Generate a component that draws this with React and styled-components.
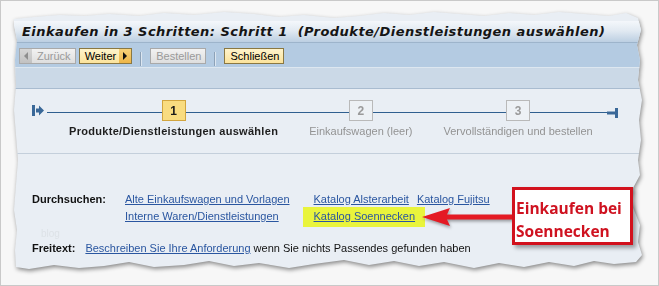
import React from 'react';
import styled, { createGlobalStyle } from 'styled-components';

const Global = createGlobalStyle`
  html, body { margin: 0; padding: 0; background: #f7f7f7; }
  body { font-family: "Liberation Sans", Arial, sans-serif; }
  * { box-sizing: border-box; }
`;

const Frame = styled.div`
  position: relative;
  width: 659px;
  height: 286px;
  border: 1px solid #c9c9c9;
  background: #f7f7f7;
  padding: 9px 0 0 13px;
  overflow: hidden;
`;

const Shadow = styled.div`
  width: 630px;
  filter: drop-shadow(1px 2px 2px rgba(0, 0, 0, 0.45));
`;

const torn = `polygon(
  0px 9px, 20px 7px, 45px 5px, 70px 6px, 95px 4px, 125px 6px, 150px 3px, 180px 5px, 210px 2px,
  240px 4px, 265px 7px, 290px 5px, 320px 8px, 345px 6px, 370px 3px, 395px 5px, 420px 2px,
  445px 4px, 470px 6px, 495px 3px, 520px 5px, 545px 2px, 570px 4px, 595px 6px, 612px 3px, 624px 8px,
  627px 20px, 623px 35px, 626px 50px, 624px 70px, 628px 90px, 625px 110px, 627px 130px, 624px 150px,
  626px 165px, 619px 178px, 615px 188px, 620px 200px, 626px 215px, 624px 232px, 628px 245px, 622px 252px,
  600px 254px, 580px 251px, 560px 256px, 535px 252px, 510px 257px, 485px 253px, 460px 258px,
  430px 252px, 405px 256px, 380px 251px, 355px 255px, 330px 250px, 300px 254px, 275px 258px,
  245px 253px, 220px 256px, 195px 251px, 170px 255px, 140px 257px, 115px 252px, 90px 256px,
  65px 258px, 40px 255px, 15px 259px, 2px 257px,
  1px 240px, 3px 220px, 0px 200px, 2px 175px, 4px 150px, 2px 125px, 0px 100px, 2px 75px,
  1px 50px, 3px 30px, 0px 15px
)`;

const Paper = styled.div`
  width: 630px;
  height: 262px;
  padding-top: 11px;
  background: #e9eef4;
  clip-path: ${torn};
`;

const TitleBar = styled.div`
  height: 22px;
  padding-left: 8px;
  display: flex;
  align-items: center;
  background: linear-gradient(#f4f7fb, #e2eaf2 45%, #bccfe2);
  border-bottom: 1px solid #9db4cb;
  font-family: "DejaVu Sans", Verdana, sans-serif;
  font-weight: bold;
  font-style: italic;
  font-size: 13px;
  letter-spacing: 0.45px;
  color: #151515;
  white-space: pre;
`;

const Toolbar = styled.div`
  height: 24px;
  padding: 5px 0 0 5px;
  display: flex;
  align-items: flex-start;
  background: #b4cbe2;
`;

const Button = styled.div`
  height: 16px;
  display: flex;
  align-items: stretch;
  border: 1px solid ${(p) => (p.$disabled ? '#a9a9a9' : '#8a7843')};
  background: ${(p) =>
    p.$disabled ? 'linear-gradient(#f2f2f2, #dedede)' : 'linear-gradient(#fff4cc, #fbe39c)'};
  color: ${(p) => (p.$disabled ? '#9a9a9a' : '#000')};
  font-size: 11px;
  line-height: 14px;
  margin-right: ${(p) => p.$gap || 0}px;
`;

const BtnText = styled.span`
  padding: 0 ${(p) => p.$pr ?? 4}px 0 5px;
`;

const Cap = styled.span`
  width: 12px;
  display: flex;
  align-items: center;
  justify-content: center;
  background: ${(p) => (p.$disabled ? 'linear-gradient(#d6d6d6, #c2c2c2)' : 'linear-gradient(#f8d27a, #eeb648)')};
`;

const Tri = styled.span`
  width: 0;
  height: 0;
  border-top: 4px solid transparent;
  border-bottom: 4px solid transparent;
  ${(p) =>
    p.$dir === 'left'
      ? `border-right: 4px solid ${p.$color};`
      : `border-left: 4px solid ${p.$color};`}
`;

const Sep = styled.span`
  width: 2px;
  height: 14px;
  margin: 4px 8px 0 8px;
  border-left: 1px solid #8da2b8;
  border-right: 1px solid #dce6f0;
`;

const SubBand = styled.div`
  height: 22px;
  background: #cbd9e7;
  border-top: 1px solid #dde7f0;
  border-bottom: 1px solid #a9bcd0;
`;

const StepBar = styled.div`
  display: flex;
  align-items: flex-start;
  padding: 11px 26px 0 18px;
`;

const Track = styled.div`
  position: relative;
  flex: 1;
  margin-left: 3px;
  display: flex;
  gap: 31px;
  padding-left: 22px;
  &::before {
    content: '';
    position: absolute;
    left: 0;
    right: 0;
    top: 12px;
    height: 1px;
    background: #2f5f8f;
  }
`;

const Step = styled.div`
  position: relative;
  display: flex;
  flex-direction: column;
  align-items: center;
  gap: 3px;
`;

const StepBox = styled.div`
  width: 24px;
  height: 21px;
  display: flex;
  align-items: center;
  justify-content: center;
  font-weight: bold;
  font-size: 12px;
  border: 1px solid ${(p) => (p.$active ? '#d2a53f' : '#b9b9b9')};
  background: ${(p) => (p.$active ? '#f9dc80' : '#edf1f5')};
  color: ${(p) => (p.$active ? '#1a1a1a' : '#9a9a9a')};
`;

const StepLabel = styled.div`
  font-size: 11px;
  line-height: 14px;
  white-space: nowrap;
  font-weight: ${(p) => (p.$active ? 'bold' : 'normal')};
  letter-spacing: ${(p) => (p.$active ? '0.3px' : '0')};
  color: ${(p) => (p.$active ? '#1e1e1e' : '#939393')};
`;

const Marker = styled.svg`
  display: block;
  margin-top: ${(p) => p.$top}px;
  flex: none;
`;

const Divider = styled.div`
  height: 1px;
  margin-top: 15px;
  background: #c4cfdb;
`;

const Browse = styled.div`
  padding: 37px 0 0 18px;
  font-size: 11px;
  line-height: 17px;
  color: #111;
`;

const Row = styled.div`
  display: flex;
  align-items: flex-start;
`;

const Label = styled.span`
  font-weight: bold;
  width: ${(p) => (p.$w ? `${p.$w}px` : 'auto')};
  margin-right: ${(p) => p.$mr || 0}px;
  flex: none;
`;

const Col = styled.div`
  display: flex;
  flex-direction: column;
  margin-left: ${(p) => p.$ml || 0}px;
  white-space: nowrap;
`;

const Link = styled.a`
  color: #2a56a0;
  text-decoration: underline;
  margin-right: ${(p) => p.$mr || 0}px;
`;

const Highlight = styled.span`
  background: #e9f43c;
  padding: 3px 10px 5px 11px;
  margin-left: -11px;
`;

const FreeRow = styled.div`
  margin-top: 15px;
  display: flex;
  white-space: pre;
`;

const Watermark = styled.span`
  position: absolute;
  left: 40px;
  top: 227px;
  font-size: 10px;
  line-height: 11px;
  color: #dde2e7;
`;

const Arrow = styled.svg`
  position: absolute;
  left: 418px;
  top: 203px;
  filter: drop-shadow(1px 2px 1.5px rgba(0, 0, 0, 0.35));
`;

const Callout = styled.div`
  position: absolute;
  left: 511px;
  top: 186px;
  width: 121px;
  height: 58px;
  border: 3px solid #d2111d;
  background: #ffffff;
  box-shadow: 3px 3px 4px rgba(0, 0, 0, 0.35);
  padding: 7px 0 0 1px;
  font-family: "Open Sans", "Noto Sans", sans-serif;
  font-weight: 700;
  font-size: 15.5px;
  line-height: 23px;
  color: #cf1220;
  white-space: nowrap;
`;

const steps = [
  { n: 1, label: 'Produkte/Dienstleistungen auswählen', active: true },
  { n: 2, label: 'Einkaufswagen (leer)' },
  { n: 3, label: 'Vervollständigen und bestellen' },
];

export default function App() {
  return (
    <>
      <Global />
      <Frame>
        <Shadow>
          <Paper>
            <TitleBar>Einkaufen in 3 Schritten: Schritt 1  (Produkte/Dienstleistungen auswählen)</TitleBar>
            <Toolbar>
              <Button $disabled $gap={3}>
                <Cap $disabled>
                  <Tri $dir="left" $color="#8e8e8e" />
                </Cap>
                <BtnText>Zurück</BtnText>
              </Button>
              <Button>
                <BtnText $pr={3}>Weiter</BtnText>
                <Cap>
                  <Tri $dir="right" $color="#111" />
                </Cap>
              </Button>
              <Sep />
              <Button $disabled>
                <BtnText>Bestellen</BtnText>
              </Button>
              <Sep />
              <Button>
                <BtnText>Schließen</BtnText>
              </Button>
            </Toolbar>
            <SubBand />
            <StepBar>
              <Marker $top={5} width="12" height="11" viewBox="0 0 12 11">
                <rect x="0" y="0" width="3" height="11" fill="#3a6898" />
                <path d="M4 3.5 H7 V0.5 L12 5.5 L7 10.5 V7.5 H4 Z" fill="#3a6898" />
              </Marker>
              <Track>
                {steps.map((s) => (
                  <Step key={s.n}>
                    <StepBox $active={s.active}>{s.n}</StepBox>
                    <StepLabel $active={s.active}>{s.label}</StepLabel>
                  </Step>
                ))}
              </Track>
              <Marker $top={8} width="11" height="10" viewBox="0 0 11 10">
                <rect x="0" y="3.5" width="8" height="3" fill="#3a6898" />
                <rect x="8" y="0" width="3" height="10" fill="#3a6898" />
              </Marker>
            </StepBar>
            <Divider />
            <Browse>
              <Row>
                <Label $w={93}>Durchsuchen:</Label>
                <Col>
                  <Link href="#">Alte Einkaufswagen und Vorlagen</Link>
                  <Link href="#">Interne Waren/Dienstleistungen</Link>
                </Col>
                <Col $ml={24}>
                  <span>
                    <Link href="#" $mr={8}>Katalog Alsterarbeit</Link>
                    <Link href="#">Katalog Fujitsu</Link>
                  </span>
                  <span>
                    <Highlight>
                      <Link href="#">Katalog Soennecken</Link>
                    </Highlight>
                  </span>
                </Col>
              </Row>
              <FreeRow>
                <Label $mr={10}>Freitext:</Label>
                <Link href="#">Beschreiben Sie Ihre Anforderung</Link>
                <span> wenn Sie nichts Passendes gefunden haben</span>
              </FreeRow>
            </Browse>
          </Paper>
        </Shadow>
        <Watermark>blog</Watermark>
        <Arrow width="96" height="26" viewBox="0 0 96 26">
          <path d="M3 13 L31 4 L28 10.5 L94 10.5 L94 15.5 L28 15.5 L31 22 Z" fill="#e41a24" />
        </Arrow>
        <Callout>
          Einkaufen bei
          <br />
          Soennecken
        </Callout>
      </Frame>
    </>
  );
}
